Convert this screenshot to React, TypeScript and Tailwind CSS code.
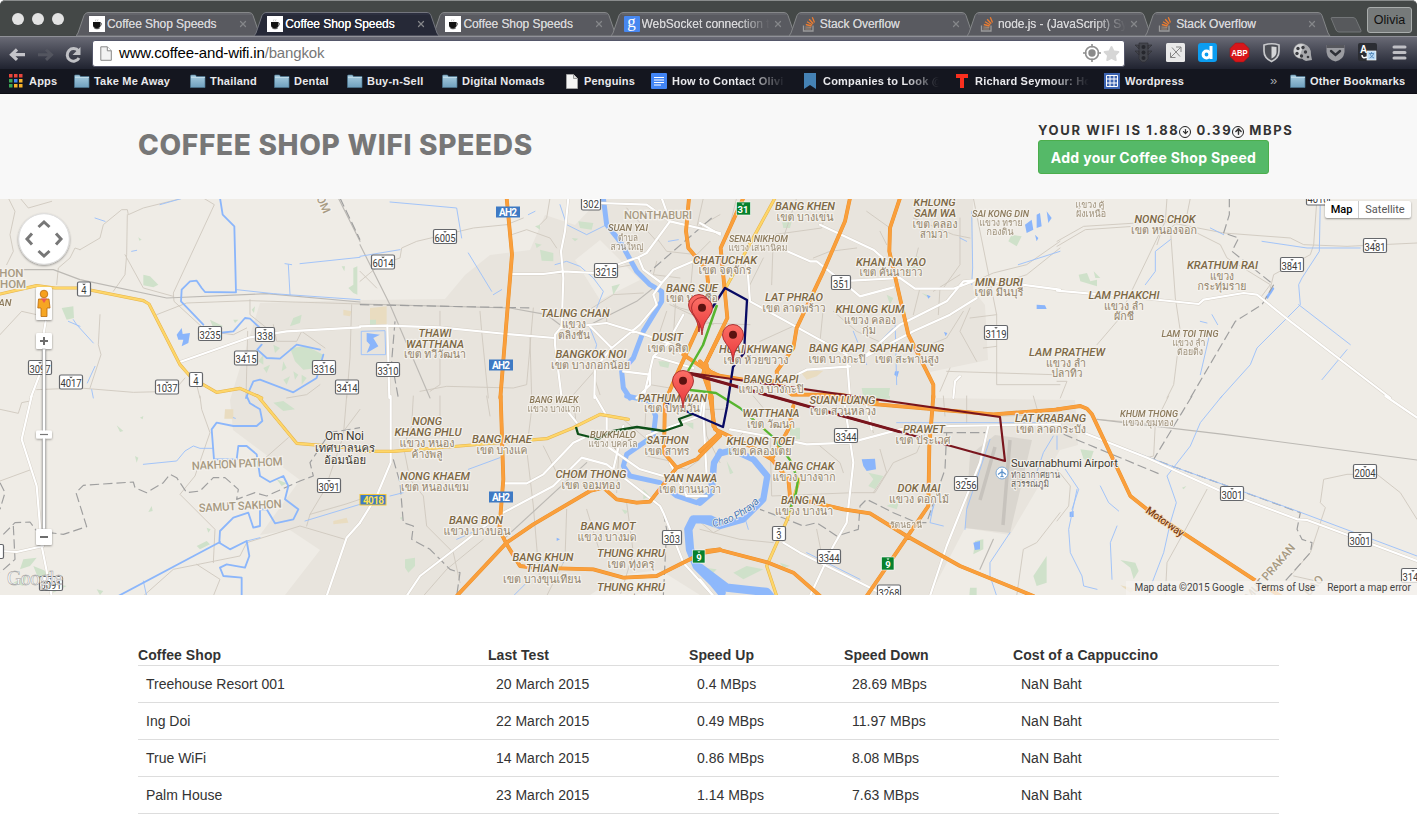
import React from "react";
import { ArrowDown, ArrowUp, X } from "lucide-react";
import { FaStar } from "react-icons/fa";

/* ---------- browser chrome ---------- */

const CupIcon = () => (
  <svg viewBox="0 0 16 16" className="size-4 shrink-0">
    <rect width="16" height="16" fill="#fff" />
    <path d="M4 6h7.500v3q0 3-2.500 3H6.500Q4 12 4 9z" fill="#111" />
    <path d="M11.300 6.800q1.800.2 1.200 1.800t-2.200 1.400" stroke="#333" fill="none" strokeWidth=".7" />
    <ellipse cx="8" cy="12.600" rx="3" ry=".7" fill="#444" />
    <path d="M7 5.500q-1-1 0-2M9 5.500q-1-1 0-2" stroke="#aaa" fill="none" strokeWidth=".7" />
  </svg>
);

const GoogleIcon = () => (
  <span className="flex size-4 shrink-0 items-center justify-center rounded-[1px] bg-[#4787f0] font-['Liberation_Serif',serif] text-[17px] leading-none text-white">
    <span className="-mt-[5px]">g</span>
  </span>
);

const StackIcon = () => (
  <svg viewBox="0 0 16 16" className="size-4 shrink-0" fill="none">
    <path d="M1.500 9.500v5.500h9.500V9.500" stroke="#9b9b9b" strokeWidth="1.300" />
    <path d="M3.200 13h6M3.300 11l6 .4" stroke="#a58b78" strokeWidth="1.200" />
    <path d="M3.800 8.500l5.800 1.500M5 5.800l5.200 3M7.200 3.300l4 4.500M10.300 1.200l2.200 5.300" stroke="#ec7d31" strokeWidth="1.300" />
  </svg>
);

const tabs = [
  { title: "Coffee Shop Speeds", icon: "cup" },
  { title: "Coffee Shop Speeds", icon: "cup", active: true },
  { title: "Coffee Shop Speeds", icon: "cup" },
  { title: "WebSocket connection t", icon: "google", fade: true },
  { title: "Stack Overflow", icon: "stack" },
  { title: "node.js - (JavaScript) Sy", icon: "stack", fade: true },
  { title: "Stack Overflow", icon: "stack" },
];

function Tab({ tab }: { tab: (typeof tabs)[number] }) {
  return (
    <div className={"relative flex h-6 w-[178.200px] shrink-0 items-center pl-[13px] " + (tab.active ? "z-10" : "")}>
      <svg className="absolute left-0 top-0" width="186" height="24" viewBox="0 0 186 24">
        <path
          d="M0 24L2 21L8 3.500Q9.500.5 12 .5H173Q176 .5 177 3.500L183 21L185 24Z"
          fill={tab.active ? "#262937" : "#595a60"}
          stroke={tab.active ? "#73757e" : "#858789"}
        />
        <path d="M11 2H175" stroke={tab.active ? "#34384a" : "#707177"} />
      </svg>
      <div className="relative flex items-center">
        {tab.icon === "cup" && <CupIcon />}
        {tab.icon === "google" && <GoogleIcon />}
        {tab.icon === "stack" && <StackIcon />}
        <span
          className={
            "ml-0.5 w-[128px] overflow-hidden whitespace-nowrap text-[12px] leading-4 tracking-[-0.060px] [text-shadow:0_0_0.5px_currentColor] " +
            (tab.active ? "text-white " : "text-[#d5d5d7] ") +
            (tab.fade ? "[mask-image:linear-gradient(to_right,black_75%,transparent)]" : "")
          }
        >
          {tab.title}
        </span>
        <X className="ml-[3px] size-2.5 text-[#85868a]" strokeWidth={3} />
      </div>
    </div>
  );
}

const Folder = () => (
  <svg viewBox="0 0 16 14" width="16" height="14" className="shrink-0">
    <defs>
      <linearGradient id="fold" x2="0" y2="1">
        <stop stopColor="#a9cde0" />
        <stop offset="1" stopColor="#6fa0be" />
      </linearGradient>
    </defs>
    <path d="M.5 2q0-1 1-1h4l1 1.500h8.500v11H.5z" fill="url(#fold)" stroke="#4c7791" strokeWidth=".7" />
    <path d="M1 3.500h14" stroke="#c6e0ec" strokeWidth=".8" />
  </svg>
);

const DocIcon = () => (
  <svg viewBox="0 0 12 15" width="12" height="15" className="shrink-0">
    <path d="M.5.5h7l4 4v10H.5z" fill="#f5f5f5" stroke="#aaa" strokeWidth=".8" />
    <path d="M7.500.5v4h4" fill="#ddd" stroke="#888" strokeWidth=".8" />
  </svg>
);

const AppsIcon = () => (
  <svg viewBox="0 0 14 14" width="14" height="14" className="shrink-0">
    {["#e8453c", "#e8453c", "#e8453c", "#3aa757", "#4688f1", "#f7b32b", "#3aa757", "#f7b32b", "#f7b32b"].map((c, i) => (
      <rect key={i} x={(i % 3) * 5} y={Math.floor(i / 3) * 5} width="3.500" height="3.500" fill={c} />
    ))}
  </svg>
);

const SheetIcon = () => (
  <svg viewBox="0 0 16 16" width="16" height="16" className="shrink-0">
    <rect width="16" height="16" fill="#4285f4" rx="1" />
    <path d="M3 4.500h10M3 7h10M3 9.500h10M3 12h7" stroke="#fff" strokeWidth="1.200" />
  </svg>
);

const Mark = ({ children, className }: { children: React.ReactNode; className: string }) => (
  <div className={"flex shrink-0 items-center overflow-hidden whitespace-nowrap " + className}>{children}</div>
);

function BookmarksBar() {
  return (
    <div className="flex h-6 items-center pl-[9px] text-[11px] font-bold tracking-[0.200px] text-[#e9e9ec]">
      <Mark className="w-[65px] gap-1.5"><AppsIcon />Apps</Mark>
      <Mark className="w-[116px] gap-[4px]"><Folder />Take Me Away</Mark>
      <Mark className="w-[84px] gap-[4px]"><Folder />Thailand</Mark>
      <Mark className="w-[73px] gap-[4px]"><Folder />Dental</Mark>
      <Mark className="w-[95px] gap-[4px]"><Folder />Buy-n-Sell</Mark>
      <Mark className="w-[124px] gap-[4px]"><Folder />Digital Nomads</Mark>
      <Mark className="w-[85px] gap-[6px]"><DocIcon />Penguins</Mark>
      <Mark className="mr-[18px] w-[135px] gap-[5px] [mask-image:linear-gradient(to_right,black_70%,transparent)]"><SheetIcon />How to Contact Olivi</Mark>
      <Mark className="mr-[17px] w-[135px] gap-[7px] [mask-image:linear-gradient(to_right,black_75%,transparent)]">
        <svg viewBox="0 0 12 16" width="12" height="16" className="shrink-0"><path d="M0 0h12v16l-6-4-6 4z" fill="#4582b4" /></svg>
        Companies to Look @
      </Mark>
      <Mark className="mr-[15px] w-[133px] gap-[7px] [mask-image:linear-gradient(to_right,black_70%,transparent)]">
        <svg viewBox="0 0 12 14" width="12" height="14" className="shrink-0"><path d="M0 0h12v4H8v10H4V4H0z" fill="#f92f1e" /></svg>
        Richard Seymour: Ho
      </Mark>
      <Mark className="w-[166px] gap-[5px]">
        <svg viewBox="0 0 16 16" width="16" height="16" className="shrink-0">
          <rect width="16" height="16" fill="#3c63b0" />
          <path d="M2.500 2.500h11v11h-11zM6 2.500v11M10 2.500v11M2.500 6h11M2.500 10h11" fill="none" stroke="#fff" />
        </svg>
        Wordpress
      </Mark>
      <span className="w-5 text-[13px] font-normal text-[#a5a6aa]">»</span>
      <Mark className="gap-[4px]"><Folder />Other Bookmarks</Mark>
    </div>
  );
}

function Extensions() {
  return (
    <svg width="290" height="28" viewBox="1125 40 290 28" className="shrink-0">
      <g fill="#43454c" stroke="#2c2d33" strokeWidth=".6">
        <path d="M1139 44h9v16l-3 3h-3l-3-3zM1135 46h4l0 4zM1152 46h-4v4zM1135 52h4v4zM1152 52h-4v4z" />
      </g>
      <g fill="#26272d"><circle cx="1143.500" cy="48" r="2" /><circle cx="1143.500" cy="53.500" r="2" /><circle cx="1143.500" cy="59" r="2" /></g>
      <rect x="1166" y="44" width="19" height="19" rx="1.500" fill="#e9e9e9" />
      <path d="M1170.500 58.500L1181 48M1176 48h5v5M1175.500 58.500h-5v-5M1172 48.500l8 9" fill="none" stroke="#858585" strokeWidth="1" />
      <rect x="1198" y="44" width="19" height="19" rx="3" fill="#0c9df0" />
      <circle cx="1206.500" cy="55.500" r="3.400" fill="none" stroke="#fff" strokeWidth="3" />
      <path d="M1211 47v13" stroke="#fff" strokeWidth="3" />
      <path d="M1235.500 44h8l5.500 5.500v8l-5.500 5.500h-8l-5.500-5.500v-8z" fill="#d8161a" stroke="#a30c0c" strokeWidth=".5" />
      <text x="1231.500" y="57" fontSize="9" fontWeight="bold" fill="#fff" textLength="16" lengthAdjust="spacingAndGlyphs" fontFamily="Liberation Sans, sans-serif">ABP</text>
      <path d="M1264 46q8-2.500 15 0v6q0 7-7.500 10.500Q1264 59 1264 52z" fill="#4c4e55" stroke="#c7c8cb" strokeWidth="1.700" />
      <path d="M1271.500 47.500q3 0 5 .6v5q0 4-5 6.500z" fill="#d5d6d8" />
      <circle cx="1301" cy="52" r="7.500" fill="#d4d5d7" stroke="#888" strokeWidth=".5" />
      <path d="M1304 45q8 3 7 11l1 5-6 1q-5-2-6-6z" fill="#a7a8ac" />
      <g fill="#3a3b40"><circle cx="1298" cy="49.500" r="1.700" /><circle cx="1303" cy="48.500" r="1.700" /><circle cx="1305.500" cy="53" r="1.700" /><circle cx="1297" cy="54.500" r="1.700" /><circle cx="1301.500" cy="57" r="1.700" /><circle cx="1308" cy="58" r="1.300" /></g>
      <path d="M1326.500 46h18v7q-1 8-9 9.500-8-1.500-9-9.500z" fill="#9b9ca1" />
      <path d="M1326.500 46h18v3h-18z" fill="#56575d" />
      <path d="M1331 52l4.500 4 4.500-4" fill="none" stroke="#2e3037" strokeWidth="2.400" strokeLinecap="round" />
      <rect x="1358" y="44" width="19" height="18" rx="2" fill="#2b2d33" />
      <text x="1360" y="54" fontSize="10" fontWeight="bold" fill="#fff" fontFamily="Liberation Sans, sans-serif">A</text>
      <path d="M1367 58q-5 2-5-2" stroke="#fff" fill="none" strokeWidth="1.500" />
      <rect x="1367" y="52" width="9" height="9" fill="#b9daf5" stroke="#fff" strokeWidth=".7" />
      <path d="M1369 54.500h5M1371.500 53v1.500M1373.500 55q-1 3-4 4M1370 55q1 3 4 4" stroke="#4a80b5" fill="none" strokeWidth=".8" />
      <path d="M1394 48h11M1394 53.500h11M1394 59h11" stroke="#c0c0c5" strokeWidth="3" strokeLinecap="round" />
    </svg>
  );
}

function Chrome() {
  return (
    <header className="h-[94px] rounded-t-md border-b border-[#0c0d13] bg-[#14161f]">
      <div className="flex h-9 items-end rounded-t-[5px] border-t border-[#8a8d8d] bg-[#444847]">
        <div className="flex h-full w-[76px] shrink-0 items-center gap-2 pl-3">
          <span className="size-3 rounded-full bg-[#e3e3e3]" />
          <span className="size-3 rounded-full bg-[#e3e3e3]" />
          <span className="size-3 rounded-full bg-[#e3e3e3]" />
        </div>
        {tabs.map((t, i) => <Tab key={i} tab={t} />)}
        <svg width="34" height="18" viewBox="0 0 34 18" className="mb-[2px] ml-[7px] shrink-0">
          <path d="M1 2Q1 1.500 3 1.500H23q2 0 3 2l5 11q.5 1.500-1 1.500H9q-2 0-3-2z" fill="#57595c" stroke="#737678" />
        </svg>
        <div className="mb-[3px] ml-auto mr-[5px] flex h-[26px] w-[45px] items-center justify-center rounded-[3px] border border-[#a9adac] bg-[#767a7a] text-[12.500px] text-[#111]">Olivia</div>
      </div>
      <div className="flex h-[33px] items-center border-t border-[#909198] bg-linear-to-b from-[#696a75] to-[#202330]">
        <svg width="92" height="32" viewBox="0 36 92 32" className="shrink-0" fill="none">
          <path d="M17 48.500l-5.500 5.200 5.500 5.200M12 53.700h13" stroke="#c4c4c9" strokeWidth="3.200" />
          <path d="M46 48.500l5.500 5.200-5.500 5.200M51 53.700H38" stroke="#53555f" strokeWidth="3" />
          <path d="M78.500 50A6.300 6.300 0 1 0 79 57" stroke="#c0c1c5" strokeWidth="3" />
          <path d="M80.500 46v8h-8z" fill="#c0c1c5" />
        </svg>
        <div className="flex h-[27px] w-[1033px] shrink-0 items-center rounded-[3px] border border-[#55576a] bg-white pl-[7px] text-[15px] text-black">
          <svg width="12" height="15" viewBox="0 0 12 15"><path d="M.8.8h6.500l4 4v9.500H.8z" fill="#f2f2f2" stroke="#888" /><path d="M7.300.8v4h4" stroke="#888" fill="#fff" /></svg>
          <span className="ml-[7px] tracking-[-0.150px]">www.coffee-and-wifi.in<span className="text-[#777]">/bangkok</span></span>
          <svg className="ml-auto" width="20" height="20" viewBox="0 0 20 20" fill="none" stroke="#8f8f8f"><circle cx="10" cy="10" r="6.500" strokeWidth="1.600" /><circle cx="10" cy="10" r="3.700" fill="#8a8a8a" stroke="none" /><path d="M10 1v3.500M10 15.500v3.500M1 10h3.500M15.500 10h3.500" strokeWidth="1.600" /></svg>
          <FaStar className="ml-px mr-[4px] size-[17px] text-[#d6d6d6]" />
        </div>
        <Extensions />
      </div>
      <BookmarksBar />
    </header>
  );
}

/* ---------- map ---------- */

// Each map sheet is drawn in its own 3x grid: [origin x, origin y].
const sheets = {
  A: [0, 198], B: [0, 396], C: [360, 198], D: [360, 396],
  E: [700, 198], F: [700, 396], G: [1057, 198], H: [1057, 396],
} as const;
type Sheet = keyof typeof sheets;
type Line = [Sheet, string];

function Lines({ data, stroke, width, dash, fill = "none" }: { data: Line[]; stroke?: string; width?: number; dash?: string; fill?: string }) {
  return (
    <>
      {data.map(([s, d], i) => (
        <path key={i} d={d} transform={`translate(${sheets[s][0]} ${sheets[s][1]}) scale(.33333)`} fill={fill} stroke={stroke} strokeWidth={width} strokeDasharray={dash} strokeLinejoin="round" strokeLinecap={dash ? "butt" : "round"} />
      ))}
    </>
  );
}

const minor: Line[] = [
  ["A", "M25 0L45 40L30 110L40 160L20 200M60 0L85 30L155 10M240 155L225 150L210 180L175 210L170 260M240 155L300 120L310 80L365 35L382 35L385 50L430 30L550 0M382 50L380 170L375 230L340 280M375 170L430 270L520 295M610 0L643 20L520 285L522 310L620 400M300 350L295 440L303 470L270 570M0 410L65 340L110 350M110 575L240 570L400 583L520 580L555 540M470 350L560 315L750 308L1080 318M743 400L738 600M750 305L750 350L800 390M600 600L590 560M620 400L700 410L740 390M820 380L830 430L890 430L905 400L975 450M1055 320L1050 480L1040 600M960 560L920 590L860 600"],
  ["B", "M0 40L55 52L65 20L90 15M0 255L90 222M600 0L605 40L630 110L585 240L540 295L645 400L640 500M780 200L865 125M1035 100L1080 40M1040 0L1030 120L975 280L930 355L1035 325L1080 310M430 600L520 520L720 480L740 440L900 390L1035 430M590 505L660 550L640 600M930 355L920 390"],
  ["C", "M0 250L60 200L120 180L125 150L170 130L340 90L440 80M455 110L500 95L570 120L590 150M540 80L560 60L570 0M440 80L490 60M240 340L240 560L210 580M360 340L365 400L385 600M180 580L260 565L460 570L500 560L520 330M510 420L515 600M0 220L50 270M680 340L760 290L850 285M740 330L740 380M940 320L960 330L1000 340M890 190L880 230L960 240M950 260L940 420M1030 0L1010 90L1080 50M820 200L700 220M640 590L720 500L800 490M720 590L700 530M870 560L930 570M1050 130L1000 180L990 290M890 120L920 160L1010 170M800 30L890 130M930 320L1060 380M920 340L900 400L940 440"],
  ["D", "M160 0L155 90L130 150L150 250L190 300L200 390L280 470L300 560M240 0L240 120M380 0L390 60M500 160L520 330L530 450L540 560M520 0L505 120M620 340L615 490L560 600M680 340L720 470M780 100L770 290M640 0L650 100M800 320L820 470L780 600M860 0L855 90M550 150L600 250L680 230M790 70L860 130L930 130M930 210L980 220L1020 190M1010 370L1060 410L1080 400M1010 470L1080 455M860 180L930 195M1030 0L1040 120L1080 200M190 600L260 520L370 430"],
  ["E", "M380 30L365 90L220 110L215 260M340 180L390 160L470 150M290 0L250 120M500 40L570 90M540 100L560 140M640 60L760 110L810 120M780 60L780 200L730 270M655 150L640 210M700 280L780 230M660 270L640 350M720 270L715 350M810 330L780 400L830 490M890 350L890 560L1080 560M850 450L890 445M290 380L180 430M370 330L360 430M0 375L150 380M110 0L90 80M190 180L150 260M400 340L470 400L580 450M750 510L720 580M690 440L740 420L790 340M810 360L890 350L820 0M1080 130L980 200L880 225L800 260M1080 150L980 230L830 280M740 520L1060 530"],
  ["F", "M0 400L120 430L220 440M210 120L215 300L460 290L525 290L580 200L650 170L680 100M400 0L410 30M500 30L520 110M730 0L735 60M800 0L800 80M80 160L130 110M0 40L70 40M360 150L420 200L430 230M900 60L1080 55M1080 350L1010 440L970 460L950 600M1000 0L1020 70M160 0L210 60M350 400L370 500M540 160L560 230L520 290"],
  ["G", "M330 0L325 70L180 370L120 440M400 0L390 50L340 90L355 300L370 400L350 560L330 600M0 130L80 85L320 70L500 105L700 120L740 140L870 145L1080 135M0 145L85 95L230 85M420 105L490 140L510 180L640 260L610 300M780 0L770 140L760 170L650 230L640 270M300 140L320 80M0 550L30 550L10 600"],
  ["H", "M335 0L295 80L290 180L270 185M450 280L380 410L330 500L325 600M960 235L870 235L800 250L790 320L805 335L760 470L700 540M960 235L1030 290L1080 370M120 70L300 85M0 220L40 270L35 330L0 375M710 540L800 560"],
];

const whiteRoads: Line[] = [
  ["A", "M540 492L750 418L860 400L1080 388M137 370L132 400L130 500L92 600"],
  ["B", "M95 0L65 130L110 270L125 450L155 600M0 465L50 468L130 450M1080 380L1040 425L980 600"],
  ["C", "M0 385L80 383L240 388L440 408L585 420M625 0L615 100L603 160L610 240L605 385L585 410L585 440L605 600M455 228L550 228L610 220L700 225L835 178L860 165L930 70L905 0M720 15L860 20L930 70L1080 105M835 178L850 215L905 255L940 215L1000 190M905 255L880 290L890 320L840 380L755 450L705 510L703 600M605 390L740 375L860 412L960 450M690 385L755 450M82 383L88 600M880 475L1000 510M880 475L850 600M790 520L870 530M870 515L870 560L830 600M960 465L1060 520M970 350L920 440L880 475"],
  ["D", "M92 0L92 200L50 300L0 380M430 262L500 262L550 235L640 140L672 125M140 600L180 540L400 370M430 350L580 270L665 185L740 205L900 330L910 350L970 500L1060 600M610 30L650 80M705 0L740 60L740 150L840 220L910 240M760 220L790 90M1030 0L1020 60L910 100L860 120M1040 240L1030 60M930 200L980 300L1040 300"],
  ["E", "M0 75L60 110M360 80L520 155L560 190M240 150L330 190L350 190L420 245L480 295L580 268M455 248L600 240L645 272L760 272L820 250M600 380L740 310L790 250L850 245L1080 275M470 490L640 400L750 350L830 300M150 310L440 470L450 600M230 560L320 515L450 505M140 180L150 310M500 470L600 380M0 500L60 540M140 540L260 570M760 600L765 550L780 535"],
  ["F", "M90 100L200 120L320 145L450 140L600 100L750 90L1080 85M430 0L460 200L440 380L400 450L330 600M865 90L840 200L740 450L690 600M250 440L300 470L400 520L560 600M500 30L515 100M0 550L40 600M15 0L10 60"],
  ["G", "M0 278L250 300L425 318L440 305L560 285L600 290L700 370L1000 600"],
  ["H", "M985 0L1080 65M80 110L270 185L490 285L560 310L720 370L750 372L880 420L960 450L1080 495"],
];

const yellowRoads: Line[] = [
  ["A", "M0 288L110 263L165 270L240 270L430 308L447 318L540 500L575 540L650 583L720 571L785 600"],
  ["B", "M773 0L890 142L1080 158"],
  ["D", "M0 166L100 166L300 150L560 128L640 95L720 55L805 70"],
  ["E", "M225 0L80 265"],
  ["F", "M298 250L262 370L200 510L230 600"],
];

const highways: Line[] = [
  ["C", "M440 0L456 170L437 400L421 600M987 0L978 100L985 150L1040 215L1050 310L950 530L920 600M970 470L1030 510L1080 535M1080 410L1035 500L1030 530L1055 600"],
  ["D", "M422 0L430 250L418 400L440 445L480 510L520 515L700 520L790 545L890 540L960 505L1040 465L1080 460M290 600L440 440L520 385L690 285L730 275L770 310L830 320L870 317L950 215L1010 190L1080 120M915 0L912 170L950 215M1055 0L1060 90L1080 115"],
  ["E", "M130 0L62 150L82 360L15 500L10 530M450 0L435 70L370 220L290 390L280 450L230 520L232 550M600 0L570 90L568 160L625 410L700 560L700 600M0 490L40 530L130 545L230 550L275 590L420 590L530 612M20 500L30 600"],
  ["F", "M340 0L530 25L880 55L1080 40M30 0L45 100L150 150L215 190L265 250L270 300M280 30L265 100L215 190M0 165L60 110M300 310L430 340L510 352L620 420L780 510L1000 600M700 0L688 150L685 330L620 425L500 600M0 472L60 462L205 500L280 530L360 600"],
  ["H", "M0 40L70 30L90 38L105 55L220 300L270 340L590 550L670 600"],
];

const rail: Line[] = [
  ["A", "M60 215L160 215L240 245L500 300L800 287L1080 312M1015 0L1080 130"],
  ["C", "M0 318L450 330L560 350L600 380M0 140L90 320L210 600M690 380L830 310L880 270"],
  ["H", "M120 70L500 115L1080 192"],
  ["D", "M430 430L680 200"],
  ["F", "M840 520L880 430"],
];

const borders: Line[] = [
  ["A", "M1020 0L1080 125"],
  ["B", "M10 415L45 380L90 378L110 405L190 415L260 392L228 290L250 268L400 258L405 275L440 290L490 260L510 235L530 245L560 290L600 285L640 245L675 245L715 280L710 310L765 290L800 300L900 255L940 240L930 200L990 110L1080 95M40 390L45 490L0 530M0 260L15 290L0 340"],
  ["C", "M0 320L520 330M105 370L95 490L115 600M1055 60L870 220"],
  ["D", "M100 190L120 260L130 380L160 390L155 430L210 460L270 520L300 530L290 600M910 350L920 400L910 600"],
  ["F", "M730 110L860 110M740 110L735 220L680 380L650 380L580 350L500 310L480 330L475 400L410 420L350 380L310 390L260 370L180 340"],
  ["G", "M517 0L517 50L500 105L545 120L525 160L650 260L615 320L535 370L400 600"],
  ["H", "M405 0L290 190L730 350L720 400L735 430L765 440L760 470L680 560M20 115L310 235"],
];

const waterThin: Line[] = [
  ["A", "M285 60L315 70M480 20L550 0M395 160L410 157M220 365L230 380L280 435M205 370L240 385M285 505L262 555M275 575L280 600M865 200L870 290M900 197L1080 178M710 275L820 287L1080 305M855 197L875 200"],
  ["B", "M430 205L530 195L555 165L580 150L600 157L640 157M430 555L440 600M740 435L780 425M915 375L1080 325M700 65L706 67"],
  ["C", "M5 400L75 398L77 470L5 470ZM90 12L180 20L290 30L305 120M325 165L395 280M400 290L425 275M0 175L120 155M600 20L620 80L680 110L740 80M690 390L710 440L700 480M585 200L620 190L660 205L700 240L730 280L710 330M925 130L955 125M505 50L525 40"],
  ["D", "M325 220L420 185M290 430L380 390M90 300L130 290M520 540L460 600M550 490L555 530M600 470L610 500"],
  ["E", "M815 40L818 210L815 260M955 200L1080 160M480 490L580 390M585 360L590 560M500 500L460 400M780 120L800 130"],
  ["F", "M590 80L730 80L1080 80M870 130L800 340L795 400M930 410L870 500L870 540L890 600M130 350L145 400M700 330L690 380L730 390M1060 120L1030 170L1000 260M320 470L480 550M720 280L690 360"],
  ["G", "M790 0L787 160L735 240L725 260L730 320L600 450L580 500L490 600M725 320L880 440M870 455L795 545M340 125L295 160L295 220L265 260M460 90L500 110M615 130L750 150L910 150M430 370L450 375M465 350L482 380M460 400L430 530"],
  ["H", "M495 0L430 80L400 150L330 240L358 320L340 380L320 470L270 600M80 110L330 205L720 345L1080 480M25 220L65 280L45 340M130 270L155 320L185 345M180 390L160 440L165 550M60 280L35 400L40 470L75 540L80 570L120 580M0 120L0 160"],
];

const waterMid: Line[] = [
  ["A", "M660 0L668 50L703 85L708 283L615 282L605 270L590 248L570 250L545 275L543 310L610 380M655 405L700 400L735 360L750 362L780 390M785 440L772 455L800 480L840 482L890 440L960 455M970 470L950 540L880 583L780 545L760 550L738 600"],
  ["B", "M740 0L750 22L780 40L787 75L770 90L700 90L650 80L635 100L642 190L710 190L715 150L740 150L770 175L780 240L810 258L850 240L865 270L855 310L895 340L880 370L825 382L800 340L780 340L780 390L760 395L745 350L700 365L660 405L658 440L690 460L740 435L748 480L735 515L680 505L660 515L670 540L725 545L725 600M355 600L660 438"],
];

const river: Line[] = [
  ["C", "M730 0L740 80L780 130L830 220L870 260L905 280L905 310L850 400L820 480L785 520L790 570L810 600"],
  ["D", "M800 0L870 15L887 60L880 120L800 175L790 210L810 240L900 260L950 300L1010 320L1050 290L1060 210L1080 165"],
];
const riverWide: Line[] = [
  ["D", "M1080 385L1050 370L1000 370L985 400L990 460L1010 510L1060 560L1085 590"],
  ["F", "M0 515L80 575L200 588L210 600"],
];
const riverLoop: Line[] = [["F", "M0 320L35 290L42 200L60 172L100 162L160 190L202 240L190 310L130 370L60 390L0 370"]];

const ponds: Line[] = [
  ["A", "M530 410L545 390L548 408L570 405L565 435L545 445L550 425L535 425Z"],
  ["C", "M20 405L60 410L40 420L55 445L20 465L30 440L20 430Z"],
  ["D", "M590 425L600 430L590 435Z"],
  ["E", "M975 80L995 65L1000 95L980 105ZM1010 50L1020 45L1025 85L1010 90ZM1040 40L1055 60L1045 75ZM1010 320L1035 322L1040 333L1010 333ZM585 520L597 520L592 537L583 530ZM732 402L742 405L737 415ZM680 290L692 295L685 302ZM1005 110L1015 120L1010 130Z"],
  ["F", "M485 190L525 188L528 220L500 225L490 210ZM820 440L840 435L840 460L825 462Z"],
  ["G", "M625 298L648 266L652 272L632 303Z"],
  ["H", "M38 348L50 345L50 363L38 363Z"],
];

const parks: Line[] = [
  ["A", "M185 330L220 325L222 360L200 365ZM430 230L450 235L475 260L460 268L430 262ZM415 118L425 125L418 128ZM1025 205L1035 205L1033 220ZM1060 210L1072 205L1072 290L1060 285L1045 270L1060 260ZM870 450L920 445L970 470L950 510L910 515L885 490ZM880 360L905 350L900 375L870 385ZM850 545L870 535L860 560ZM700 365L715 365L705 375ZM790 510L810 500L800 525ZM630 365L670 385L640 390ZM820 440L840 450L825 465ZM850 490L860 510L845 520ZM755 335L765 325L762 345ZM880 520L895 530L885 545ZM790 470L775 490L790 500ZM905 530L920 540L905 560Z"],
  ["B", "M820 20L850 15L885 40L850 45ZM405 180L415 185L410 200ZM350 88L370 105L360 108ZM420 65L430 60L428 70ZM455 330L458 345L445 348ZM590 450L620 435L630 445L600 460ZM70 490L110 485L90 510L60 520ZM40 560L80 540L70 570ZM100 510L150 530L120 560ZM150 560L200 570L160 590ZM290 580L310 585L300 597ZM830 250L860 262L845 270ZM620 395L632 400L625 410Z"],
  ["C", "M540 155L580 165L580 190L545 188ZM525 85L540 80L540 95ZM655 70L700 75L695 95L660 90ZM635 120L655 122L645 130ZM525 135L545 140L530 150ZM755 265L780 258L760 290ZM30 365L48 365L48 383L30 383ZM895 490L930 490L925 510L900 505Z"],
  ["D", "M135 490L165 485L165 510L145 530L135 515ZM785 340L805 345L795 355ZM360 515L370 520L363 528ZM970 80L1000 80L1000 100ZM120 365L128 362L125 372ZM1035 515L1070 520L1060 530ZM850 280L870 300L850 310Z"],
  ["E", "M245 65L275 70L270 90L250 90ZM620 180L655 175L660 210L620 215ZM485 570L570 570L565 600L490 600ZM10 260L50 270L40 330L20 320ZM935 110L965 115L950 145L925 130ZM560 290L580 300L570 320ZM665 285L680 290L685 300Z"],
  ["F", "M480 0L570 0L570 8L500 8ZM270 95L300 95L300 130L270 130ZM505 230L550 240L525 280L505 270L520 250ZM825 435L850 430L850 460L820 475ZM810 575L830 575L830 600L808 600ZM100 530L140 510L190 520L130 550ZM80 195L100 230L90 235ZM1000 540L1040 480L1040 560L1010 570ZM560 330L600 310L590 340ZM240 500L270 510L250 515Z"],
  ["G", "M65 230L90 225L100 250L120 245L120 265L70 250ZM110 220L130 240L115 240Z"],
  ["H", "M70 160L110 165L100 195L80 190ZM190 492L235 500L245 525L230 550L220 515ZM375 275L388 270L380 280Z"],
];

const tan: Line[] = [
  ["B", "M675 40L700 40L700 68L673 68ZM1000 375L1040 365L1045 380L1000 385Z"],
  ["C", "M30 330L80 325L80 383L30 383Z"],
  ["A", "M1030 335L1055 340L1050 355L1030 352Z"],
  ["E", "M300 520L370 518L350 535L320 545Z"],
  ["H", "M190 568L240 580L220 590Z"],
];

type Label = [string, number, number, number, number?];
const districts: Label[] = [
  ["SUAN YAI", 628, 231, 40, 9.5], ["CHATUCHAK", 725, 263.7, 64], ["BANG SUE", 692, 291.5, 52], ["TALING CHAN", 575, 317, 69],
  ["THAWI", 435, 337, 33], ["WATTHANA", 435, 347.5, 58], ["BANGKOK NOI", 591, 358, 71], ["DUSIT", 667.5, 341, 31], ["PATHUM WAN", 672.5, 402, 69],
  ["BANG WAEK", 554, 403, 49, 9.5], ["NONG", 427, 425, 30], ["KHANG PHLU", 428, 436, 67], ["BANG KHAE", 502, 443, 60], ["NONG KHAEM", 435, 479.5, 70],
  ["BUKKHALO", 613, 438, 46, 9.5], ["SATHON", 667.5, 443.5, 42], ["CHOM THONG", 591, 478, 71], ["YAN NAWA", 690, 482, 54], ["BANG BON", 476, 524, 54],
  ["BANG MOT", 608, 530, 55], ["THUNG KHRU", 631, 557, 68], ["THUNG KHRU", 631, 591, 68], ["BANG KHUN", 543, 561, 61], ["THIAN", 542, 572, 32],
  ["BANG KHEN", 805, 210, 60], ["KHLONG", 934.5, 206, 42], ["SAM WA", 935, 216.5, 42], ["SAI KONG DIN", 1000.5, 217, 57, 9.5],
  ["SENA NIKHOM", 758.5, 241.5, 59, 9.5], ["KHAN NA YAO", 891, 265.5, 70], ["MIN BURI", 999, 285.5, 48], ["LAT PHRAO", 794, 300.5, 58],
  ["KHLONG KUM", 870, 313, 69], ["HUAI KHWANG", 756, 353, 74], ["BANG KAPI", 837, 352, 56], ["SAPHAN SUNG", 907, 352, 75], ["BANG KAPI", 771, 383, 55],
  ["SUAN LUANG", 842.5, 404, 66], ["WATTHANA", 771, 417, 57], ["PRAWET", 924, 433, 42], ["KHLONG TOEI", 760.5, 445, 68], ["BANG CHAK", 804.5, 470, 60],
  ["DOK MAI", 919, 492, 43], ["BANG NA", 803.5, 504, 45], ["LAT KRABANG", 1050.5, 421.5, 71], ["NONG CHOK", 1165, 223, 61], ["KRATHUM RAI", 1222.5, 269, 71],
  ["LAM PHAKCHI", 1124, 299, 71], ["LAM TOI TING", 1190, 337, 57, 9.5], ["LAM PRATHEW", 1067, 356, 76], ["KHUM THONG", 1149, 417, 58, 9.5], ["AN", 5, 306, 13, 9.5],
];
const thai: Label[] = [
  ["ตำบล", 628, 240.5, 20, 9], ["สวนใหญ่", 627, 250, 33, 9], ["เขต จตุจักร", 725, 274, 53], ["เขต บางซื่อ", 692, 302, 52], ["แขวง", 574, 327.5, 24], ["ตลิ่งชัน", 574, 338.5, 32],
  ["เขต ทวีวัฒนา", 435, 358, 62], ["เขต บางกอกน้อย", 590.5, 368.5, 79], ["เขต ดุสิต", 668, 351.5, 41], ["เขต ปทุมวัน", 672, 412, 56], ["แขวง บางแวก", 554, 412, 53, 9],
  ["แขวง หนอง", 427, 447, 55], ["ค้างพลู", 427, 458, 31], ["เขต บางแค", 502, 453.5, 51], ["เขต หนองแขม", 435, 490.5, 68], ["แขวง บุคคโล", 613, 447, 49, 9],
  ["เขต สาทร", 667, 454.5, 45], ["เขต จอมทอง", 591, 488.5, 59], ["เขต ยานนาวา", 690, 493, 62], ["แขวง บางบอน", 477, 534.5, 67], ["แขวง บางมด", 607, 540.5, 59],
  ["เขต ทุ่งครุ", 631, 567.5, 47], ["เขต ทุ่งครุ", 631, 602, 47], ["เขต บางขุนเทียน", 542, 583, 78], ["เขต บางเขน", 805, 220.5, 57], ["เขต คลอง", 935, 227.5, 45], ["สามวา", 934, 238, 28],
  ["แขวง ทราย", 1001, 226, 43, 9], ["กองดิน", 1000, 235, 27, 9], ["แขวง เสนานิคม", 758, 251, 59, 9], ["เขต คันนายาว", 891, 276, 63], ["เขต มีนบุรี", 999, 296, 49],
  ["เขต ลาดพร้าว", 794, 311.5, 63], ["แขวง คลอง", 870, 323.5, 52], ["กุ่ม", 869, 334, 14], ["เขต ห้วยขวาง", 756, 363.5, 65], ["เขต บางกะปิ", 837, 363, 57], ["เขต สะพานสูง", 907, 363, 64],
  ["แขวง บางกะปิ", 771, 393, 65], ["เขต สวนหลวง", 843, 414.5, 66], ["เขต วัฒนา", 771, 428, 48], ["เขต ประเวศ", 923, 443.5, 55], ["เขต คลองเตย", 760, 455, 63], ["แขวง บางจาก", 804, 481, 63],
  ["แขวง ดอกไม้", 919, 503, 60], ["แขวง บางนา", 804, 514.5, 58], ["รัตนธานี", 906, 528, 32, 9], ["เขต ลาดกระบัง", 1051, 432.5, 70], ["แขวง คู้", 1090, 208, 29, 9], ["ฝั่งเหนือ", 1091, 217, 30, 9],
  ["เขต หนองจอก", 1164, 233.5, 66], ["แขวง", 1222, 279.5, 24], ["กระทุ่มราย", 1222, 290, 49], ["แขวง ลำ", 1124, 309.5, 40], ["ผักชี", 1124, 320, 20], ["แขวง ลำ", 1189, 346, 33, 9], ["ต้อยติ่ง", 1190, 355, 26, 9],
  ["แขวง ลำ", 1066, 366.5, 40], ["ปลาทิว", 1067, 377, 31], ["แขวง ขุมทอง", 1148, 425.5, 51, 9],
];

const shields: [string, number, number][] = [
  ["4", 84, 289], ["3235", 210, 333.5], ["338", 265, 334.5], ["3415", 246, 358], ["3316", 324, 367.5], ["3414", 347, 387], ["1037", 167, 387], ["4", 196, 379.5],
  ["4017", 71, 382], ["3097", 40, 367.5], ["6005", 445, 236.5], ["6014", 383, 262], ["3215", 606, 270.5], ["302", 591, 203], ["3310", 388, 369.5], ["3091", 329, 485.5],
  ["303", 672, 537.5], ["3344", 846, 435.5], ["3344", 829, 556.5], ["3256", 966, 483.5], ["3", 779, 533.5], ["351", 841, 282.5], ["3119", 996, 332.5], ["3268", 889, 592],
  ["3841", 1292, 264.5], ["3481", 1375, 245.5], ["4010", 1318, 198], ["3001", 1232, 493.5], ["3001", 1360, 539.5], ["2004", 1365, 471.5], ["3141", 1413, 575.5], ["3091", 51, 583.5], ["6", -3, 551.5],
];

const Pin = ({ x, y }: { x: number; y: number }) => (
  <g transform={`translate(${x} ${y})`}>
    <path d="M0 27C-1 17-3 14-7 8.500Q-10.500 4-10.500 0A10.500 10.500 0 0 1 10.500 0Q10.500 4 7 8.500C3 14 1 17 0 27Z" fill="url(#pin)" stroke="#a3282a" strokeWidth=".9" />
    <circle r="4" fill="#5c1210" cy="-.3" />
  </g>
);

function Texts({ data, size, color, weight, italic }: { data: Label[]; size: number; color: string; weight?: number; italic?: boolean }) {
  return (
    <g fill={color} stroke="#f4f1ec" strokeWidth="2.400" paintOrder="stroke" strokeLinejoin="round" textAnchor="middle" fontWeight={weight} fontStyle={italic ? "italic" : undefined}>
      {data.map(([t, x, y, w, s], i) => (
        <text key={i} x={x} y={y} fontSize={s ?? size} textLength={w} lengthAdjust="spacingAndGlyphs" opacity={s ? 0.85 : 1}>{t}</text>
      ))}
    </g>
  );
}

function MapDrawing() {
  return (
    <svg width="1417" height="396" viewBox="0 199 1417 396" className="block" fontFamily="Roboto, Loma, Waree, 'Noto Sans Thai Looped', 'Noto Sans Thai', 'Noto Sans', sans-serif">
      <defs>
        <linearGradient id="pin" x2="0" y2="1"><stop stopColor="#fb6f66" /><stop offset="1" stopColor="#e8363a" /></linearGradient>
        <filter id="soft" x="-20%" y="-20%" width="140%" height="150%"><feDropShadow dx="0" dy="1" stdDeviation="1" floodOpacity=".4" /></filter>
        <path id="chao" d="M713 527Q742 522 761 500" />
      </defs>
      <rect y="199" width="1417" height="396" fill="#efece6" />
      <path d="M260 303L360 300L445 299L465 275L490 255L530 250L545 215L575 225L600 199H973V290L985 305L988 360L930 372L935 398L1075 400L1078 445L1060 450L1010 535L965 528L930 595H285L320 550L290 530L260 535L300 480L233 430L230 400Z" fill="#e8e4dd" />
      <path d="M590 595L620 575L660 570L700 595ZM575 260L600 300L640 280L600 240Z" fill="#efece6" />
      <path d="M970 455L995 435L1032 440L1010 533L965 528Z" fill="#dad6cf" />
      <path d="M995 447L980 500M1010 440L1003 525" stroke="#c7c3bd" strokeWidth="3.500" />
      <Lines data={tan} fill="#e9dcc0" />
      <Lines data={parks} fill="#cfe1ca" />
      <Lines data={ponds} fill="#8ab5fb" />
      <Lines data={minor} stroke="#cfc8be" width={2.7} />
      <Lines data={rail} stroke="#bcb9b4" width={3.5} />
      <Lines data={borders} stroke="#9f9f9f" width={3.5} dash="28 12" />
      <Lines data={waterThin} stroke="#9cc1fa" width={2.8} />
      <Lines data={waterMid} stroke="#8bb6fb" width={5.5} />
      <Lines data={river} stroke="#8eb8fb" width={15} />
      <Lines data={riverLoop} stroke="#8eb8fb" width={19} />
      <Lines data={riverWide} stroke="#8eb8fb" width={25} />
      <Lines data={whiteRoads} stroke="#d6d0c7" width={9} />
      <Lines data={whiteRoads} stroke="#fff" width={6.5} />
      <Lines data={yellowRoads} stroke="#e5b34b" width={9.5} />
      <Lines data={yellowRoads} stroke="#fed669" width={6.5} />
      <Lines data={highways} stroke="#ea9028" width={11.5} />
      <Lines data={highways} stroke="#fa9f3c" width={9} />

      <g fill="none" strokeLinejoin="round">
        <path d="M576 427L578 434L598 439L613 431L637 427L664 431L682 425L679 419L693 414" stroke="#0d4f18" strokeWidth="2.300" />
        <path d="M717 305L703 345L688 371" stroke="#57b52f" strokeWidth="2.500" />
        <path d="M690 390L716 393L740 408L773 437L790 460L798 480L796 493L789 512" stroke="#57b52f" strokeWidth="2.300" />
        <path d="M665 402L723 427L727 407L733 367L744 353L747 300L725 288L712 308" stroke="#080a63" strokeWidth="2.300" />
        <path d="M690 373L1000 417L1005 461L688 373" stroke="#79151d" strokeWidth="2.200" />
        <path d="M688 373L770 395.800L900 431.900" stroke="#79151d" strokeWidth="3" />
      </g>

      <Texts data={thai} size={11} color="#92836a" />
      <Texts data={districts} size={11.5} color="#7c6845" weight={500} italic />
      <g fill="#a79a82" fontWeight="500" fontSize="11.500" stroke="#f4f1ec" strokeWidth="2.400" paintOrder="stroke">
        <text x="624" y="218.700" textLength="68">NONTHABURI</text>
        <text x="192" y="470" textLength="91" transform="rotate(-3 192 470)">NAKHON PATHOM</text>
        <text x="199" y="512" textLength="83" transform="rotate(-3 199 512)">SAMUT SAKHON</text>
        <text x="-8" y="277">KHON</text>
        <text x="-7" y="288">THOM</text>
        <text x="310" y="184" transform="rotate(66 310 184)">THOM</text>
        <text x="1250" y="601" transform="rotate(-49 1250 601)" textLength="70">MUT PRAKAN</text>
        <text x="1297" y="611" transform="rotate(-49 1297 611)">NG BAO</text>
      </g>
      <g fill="#3d3931" fontSize="12" stroke="#f4f1ec" strokeWidth="2" paintOrder="stroke">
        <text x="325" y="440" textLength="39">Om Noi</text>
        <text x="315" y="452" fontSize="11" textLength="60" lengthAdjust="spacingAndGlyphs">เทศบาลนคร</text>
        <text x="324" y="463.500" fontSize="11" textLength="42" lengthAdjust="spacingAndGlyphs">อ้อมน้อย</text>
        <text x="1011" y="467" fontSize="11.500" textLength="107">Suvarnabhumi Airport</text>
        <text x="1011" y="477.500" fontSize="9" fill="#6b665e" textLength="49" lengthAdjust="spacingAndGlyphs">ท่าอากาศยาน</text>
        <text x="1011" y="487" fontSize="9" fill="#6b665e" textLength="38" lengthAdjust="spacingAndGlyphs">สุวรรณภูมิ</text>
      </g>
      <text fill="#4877b5" fontSize="10.500" fontStyle="italic" stroke="#f4f1ec" strokeWidth="1.500" paintOrder="stroke"><textPath href="#chao" textLength="54">Chao Phraya</textPath></text>
      <text x="1145" y="512" fill="#804114" fontSize="10.500" fontWeight="500" textLength="44" stroke="#f6dcbb" strokeWidth="1.500" paintOrder="stroke" transform="rotate(35 1145 512)">Motorway</text>
      <circle cx="1002" cy="473" r="6" fill="#fff" stroke="#7fabd8" />
      <path d="M1002 469v8M998 474.500l4-3 4 3M1000.500 477l1.500-1 1.500 1" stroke="#5b92cc" strokeWidth="1.200" fill="none" />

      <g fontSize="10" fill="#3c3c3c" textAnchor="middle">
        {shields.map(([t, x, y], i) => {
          const w = t.length === 4 ? 23 : t.length === 3 ? 19 : 13;
          return (
            <g key={i}>
              <rect x={x - w / 2} y={y - 7} width={w} height="14" rx="1.500" fill="#fff" stroke="#65676b" strokeWidth="1.200" />
              <path d={`M${x - 1.8} ${y - 5.300}h3.600l-1.800 1.600z`} />
              <text x={x} y={y + 5} textLength={t.length * 5.3} lengthAdjust="spacingAndGlyphs">{t}</text>
            </g>
          );
        })}
      </g>
      <g fontSize="10" fontWeight="bold" fill="#fff" textAnchor="middle">
        {[[508, 212], [501, 365], [501, 497]].map(([x, y]) => (
          <g key={y}><rect x={x - 12} y={y - 5.5} width="24" height="11" fill="#3e7ac4" /><text x={x} y={y + 3.7} textLength="18">AH2</text></g>
        ))}
        <rect x="360" y="494.500" width="26" height="10.500" fill="#3e7ac4" stroke="#f3c63d" />
        <text x="373.500" y="503.500" fill="#ffe14d" textLength="21">4018</text>
        {([["31", 743, 208.5], ["9", 699, 556.5], ["9", 888, 563.5]] as [string, number, number][]).map(([t, x, y]) => (
          <g key={y}><rect x={x - 6.5} y={y - 6.5} width={t.length > 1 ? 14 : 12.5} height="13" fill="#07812d" stroke="#fff" strokeWidth=".6" /><text x={x} y={y + 4.5} fontSize="9.500">{t}</text><path d={`M${x - 1.500} ${y - 5}h3l-1.500 1.500z`} /></g>
        ))}
      </g>

      <Pin x={699} y={305} />
      <Pin x={702} y={308} />
      <Pin x={733} y={335} />
      <Pin x={683} y={381} />

      {/* pan, street view and zoom controls */}
      <g filter="url(#soft)">
        <circle cx="44" cy="239" r="25.300" fill="#fff" stroke="#ddd" />
        <rect x="36" y="287" width="16" height="33" rx="1.500" fill="#fcfcfc" />
        <rect x="36" y="333" width="16" height="16" rx="1.500" fill="#fff" />
        <rect x="42.500" y="349" width="3" height="180" fill="#fff" stroke="#999" strokeWidth=".6" />
        <rect x="36" y="430.500" width="16" height="8" rx="1.500" fill="#fff" />
        <rect x="36" y="529" width="16" height="16" rx="1.500" fill="#fff" />
      </g>
      <g fill="none" stroke="#777" strokeWidth="3">
        <path d="M38.500 227l5.500-5 5.500 5M38.500 251l5.500 5 5.500-5M32 233.500l-5 5.500 5 5.500M56 233.500l5 5.500-5 5.500" />
        <path d="M40 341h8M44 337v8M40 537h8" strokeWidth="2" stroke="#6d6d6d" />
        <path d="M40 434.500h8" strokeWidth="1.200" />
      </g>
      <path d="M38.500 299h10.500l1 9h-3v8.500h-6V308h-3.200z" fill="#f6a623" stroke="#b8690f" strokeWidth=".8" />
      <circle cx="44" cy="294" r="3.800" fill="#f7a11c" stroke="#b8690f" strokeWidth=".8" />
      <path d="M41 298.500h6l-3 4.500z" fill="#ee5a52" />
      <text x="7" y="585" fontFamily="'Liberation Serif', serif" fontSize="20" fill="#fff" stroke="#999" strokeWidth=".5" textLength="56">Google</text>
    </svg>
  );
}

function CoffeeMap() {
  return (
    <section className="relative h-[396px] overflow-hidden">
      <MapDrawing />
      <div className="absolute right-[6px] top-[2px] flex h-[17px] rounded-[2px] bg-white font-[Roboto,sans-serif] text-[11px] leading-[17px] shadow-[0_1px_2px_rgba(0,0,0,0.4)]">
        <span className="w-[34px] border-r border-[#ccc] text-center font-medium text-black">Map</span>
        <span className="w-[52px] text-center text-[#565656]">Satellite</span>
      </div>
      <div className="absolute bottom-0 right-0 flex h-[14px] gap-[12px] bg-[#f5f3ef]/80 pl-2 pr-[6px] font-[Roboto,sans-serif] text-[10px] leading-[14px] tracking-[0.020px] text-[#444]">
        <span>Map data ©2015 Google</span><span>Terms of Use</span><span>Report a map error</span>
      </div>
    </section>
  );
}

/* ---------- page ---------- */

const rows = [
  ["Treehouse Resort 001", "20 March 2015", "0.4 MBps", "28.69 MBps", "NaN Baht"],
  ["Ing Doi", "22 March 2015", "0.49 MBps", "11.97 MBps", "NaN Baht"],
  ["True WiFi", "14 March 2015", "0.86 MBps", "8.08 MBps", "NaN Baht"],
  ["Palm House", "23 March 2015", "1.14 MBps", "7.63 MBps", "NaN Baht"],
];

const Arrow = ({ up }: { up?: boolean }) => (
  <span className="mt-px flex size-3 shrink-0 items-center justify-center rounded-full border-[1.500px] border-[#222]">
    {up ? <ArrowUp className="size-[9px]" strokeWidth={4} /> : <ArrowDown className="size-[7px]" strokeWidth={4} />}
  </span>
);

export default function App() {
  return (
    <div className="h-[815px] w-[1417px] overflow-hidden bg-white font-['Liberation_Sans',Arial,sans-serif] text-[#333]">
      <Chrome />
      <div className="flex h-[105px] justify-between bg-[#f8f8f8] pl-[138px] pr-[124px] font-[Inter,sans-serif]">
        <h1 className="mt-[30px] whitespace-nowrap text-[28px] font-extrabold leading-[42px] tracking-[0.700px] text-[#777]">COFFEE SHOP WIFI SPEEDS</h1>
        <div className="mt-[28px] w-[255px]">
          <div className="flex h-[18px] items-center whitespace-nowrap text-[13px] font-bold tracking-[1.650px]">
            YOUR WIFI IS 1.88<Arrow /><span className="ml-[5px]">0.39</span><Arrow up /><span className="ml-[5px]">MBPS</span>
          </div>
          <button className="h-[34px] w-[231px] whitespace-nowrap rounded-[3px] border border-[#4cae4c] bg-[#55b968] text-[14px] font-bold tracking-[0.330px] text-white">Add your Coffee Shop Speed</button>
        </div>
      </div>
      <CoffeeMap />
      <main className="ml-[138px] mt-[50px] w-[1141px] text-[14px] leading-5">
        <div className="grid h-[21px] grid-cols-[350px_201px_155px_169px_1fr] border-b border-[#ddd] font-bold tracking-[0.060px]">
          {["Coffee Shop", "Last Test", "Speed Up", "Speed Down", "Cost of a Cappuccino"].map((h) => <span key={h}>{h}</span>)}
        </div>
        {rows.map((r) => (
          <div key={r[0]} className="grid h-[37px] grid-cols-[350px_201px_155px_169px_1fr] border-b border-[#ddd] pt-2">
            {r.map((c, i) => <span key={i} className="pl-2">{c}</span>)}
          </div>
        ))}
      </main>
    </div>
  );
}
